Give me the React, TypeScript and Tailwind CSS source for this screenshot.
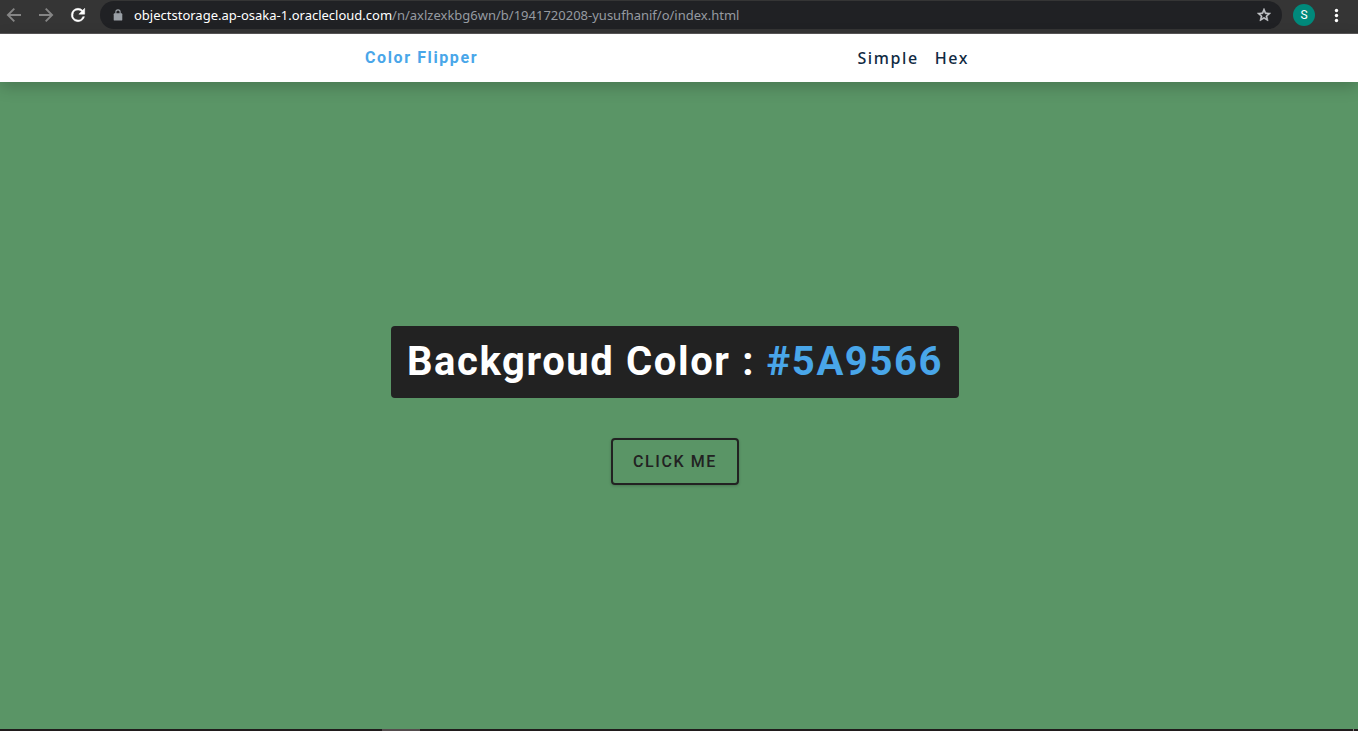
import { useState } from "react";

function BrowserBar() {
  return (
    <header className="flex h-[34px] items-center border-b border-[#5a5859] bg-[#353535] pb-[3px] font-['Noto_Sans',sans-serif]">
      <button type="button" aria-label="Back" className="ml-1 grid size-5 shrink-0 place-items-center text-[#858585]">
        <svg viewBox="0 0 20 20" className="size-5" fill="none" stroke="currentColor" strokeWidth="1.9">
          <path d="M17 10H4M10.3 3.6 3.9 10l6.4 6.4" />
        </svg>
      </button>
      <button type="button" aria-label="Forward" className="ml-3 grid size-5 shrink-0 place-items-center text-[#858585]">
        <svg viewBox="0 0 20 20" className="size-5" fill="none" stroke="currentColor" strokeWidth="1.9">
          <path d="M3 10h13M9.7 3.6l6.4 6.4-6.4 6.4" />
        </svg>
      </button>
      <button type="button" aria-label="Reload" className="ml-3 grid size-5 shrink-0 place-items-center text-white">
        <svg viewBox="0 0 24 24" className="size-5" fill="currentColor" stroke="currentColor" strokeWidth="0.6">
          <path d="M17.65 6.35A7.96 7.96 0 0 0 12 4a8 8 0 1 0 7.73 10h-2.08A6 6 0 1 1 12 6c1.66 0 3.14.69 4.22 1.78L13 11h7V4z" />
        </svg>
      </button>
      <div className="ml-3 flex h-7 min-w-0 flex-1 items-center rounded-full bg-[#202124] pr-2 pl-3">
        <svg viewBox="0 0 12 14" className="mr-[10px] h-3 w-3 shrink-0" fill="#9aa0a6">
          <path d="M2 5h8a1 1 0 0 1 1 1v6.500a1 1 0 0 1-1 1H2a1 1 0 0 1-1-1V6a1 1 0 0 1 1-1z" />
          <path d="M3.500 6V3.500a2.500 2.500 0 0 1 5 0V6" fill="none" stroke="#9aa0a6" strokeWidth="1.300" />
        </svg>
        <span className="min-w-0 flex-1 truncate text-[13px] leading-5 text-[#969ba1]">
          <span className="text-white">objectstorage.ap-osaka-1.oraclecloud.com</span>
          /n/axlzexkbg6wn/b/1941720208-yusufhanif/o/index.html
        </span>
        <button type="button" aria-label="Bookmark this page" className="grid size-5 shrink-0 place-items-center">
          <svg viewBox="0 0 24 24" className="size-4" fill="#c8cacd" stroke="#c8cacd" strokeWidth="0.8">
            <path d="m22 9.240-7.190-.62L12 2 9.190 8.630 2 9.240l5.460 4.730L5.820 21 12 17.270 18.180 21l-1.630-7.030zM12 15.400l-3.760 2.270 1-4.280-3.320-2.880 4.380-.38L12 6.100l1.710 4.040 4.380.38-3.320 2.880 1 4.280z" />
          </svg>
        </button>
      </div>
      <button type="button" aria-label="Profile" className="ml-[11px] grid size-[22px] shrink-0 place-items-center rounded-full bg-[#00897b] font-['Roboto',sans-serif] text-xs text-white">
        S
      </button>
      <button type="button" aria-label="Menu" className="mr-3 ml-[11px] grid size-5 shrink-0 place-items-center text-white">
        <svg viewBox="0 0 20 20" className="size-5" fill="currentColor">
          <circle cx="10.500" cy="5.500" r="1.700" />
          <circle cx="10.500" cy="10.500" r="1.700" />
          <circle cx="10.500" cy="15.500" r="1.700" />
        </svg>
      </button>
    </header>
  );
}

export default function App() {
  const [color, setColor] = useState("#5A9566");

  const flip = () => {
    const value = Math.floor(Math.random() * 0x1000000);
    setColor("#" + value.toString(16).padStart(6, "0").toUpperCase());
  };

  return (
    <div className="flex min-h-screen flex-col font-['Roboto',sans-serif]">
      <BrowserBar />
      <div className="flex flex-1 flex-col" style={{ backgroundColor: color }}>
        <nav className="bg-white pr-2 shadow-[0_5px_15px_rgba(0,0,0,0.2)]">
          <div className="mx-auto flex h-12 max-w-[620px] items-center justify-between">
            <a href="#home" className="text-base font-bold tracking-[0.1rem] text-[#49a6e9]">
              Color Flipper
            </a>
            <ul className="flex gap-4 pr-4 font-['Noto_Sans',sans-serif] text-base font-medium tracking-[0.1rem] text-[#102a42]">
              <li><a href="#simple">Simple</a></li>
              <li><a href="#hex">Hex</a></li>
            </ul>
          </div>
        </nav>
        <main className="flex flex-1 flex-col items-center justify-center gap-10 pr-2">
          <h2 className="rounded bg-[#222] p-4 text-[40px] leading-10 font-bold tracking-[0.1rem] text-white">
            Backgroud Color : <span className="text-[#49a6e9]">{color}</span>
          </h2>
          <button
            type="button"
            onClick={flip}
            className="rounded border-2 border-[#222] px-5 py-[10px] text-base leading-[23px] font-medium tracking-[0.1rem] text-[#222] uppercase shadow-[0_1px_3px_rgba(0,0,0,0.2)]"
          >
            Click me
          </button>
        </main>
      </div>
      <footer className="flex h-[2px] bg-[#201b1c]">
        <div className="ml-[28%] w-10 border-l-2 border-[#201b1c] bg-[#544c4d]" />
        <div className="mr-1 ml-auto w-px bg-[#8a8586]" />
      </footer>
    </div>
  );
}
